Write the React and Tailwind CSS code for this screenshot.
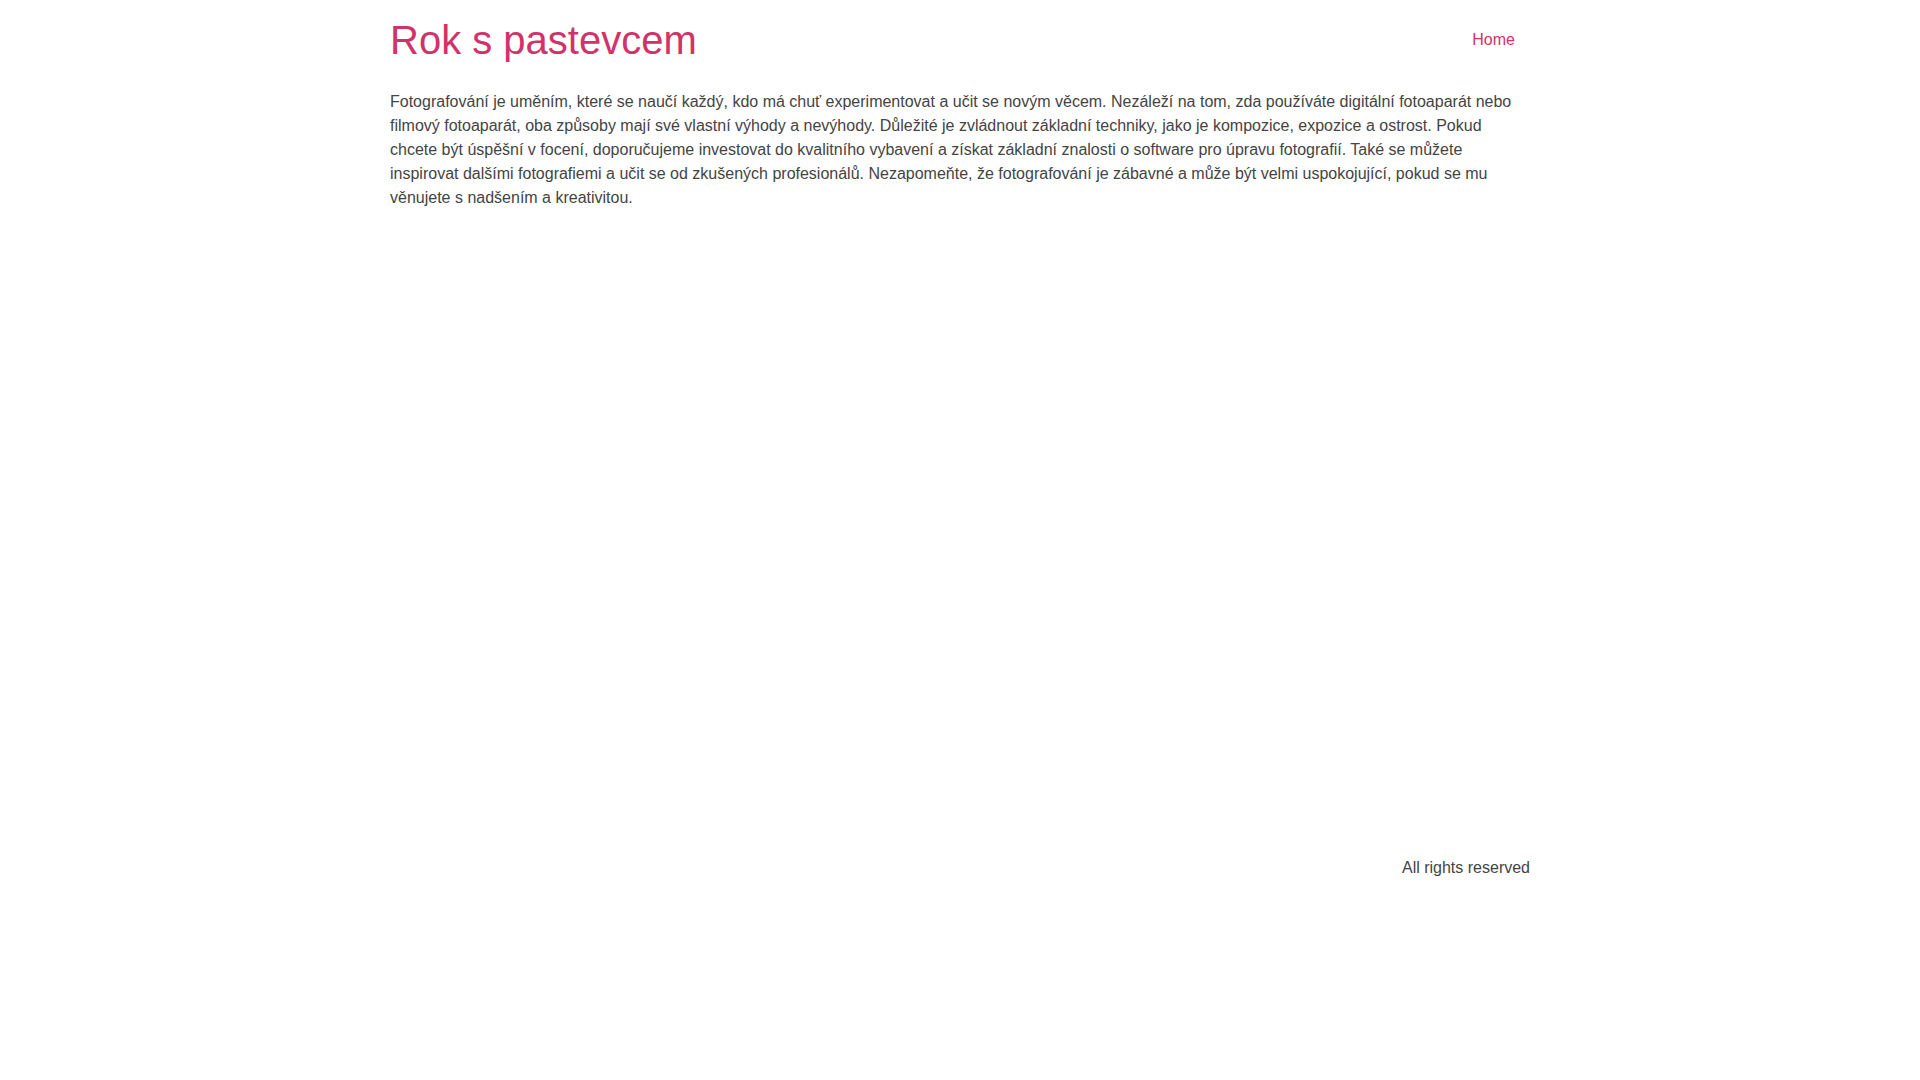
export default function App() {
  return (
    <div className="min-h-screen bg-white font-['Liberation_Sans',Arial,sans-serif]">
      <div className="mx-auto w-[1140px]">
        <header className="flex h-[80px] items-center justify-between">
          <h1 className="text-[40px] leading-[48px] font-normal text-[#d0336a]">Rok s pastevcem</h1>
          <nav>
            <a href="#" className="pl-4 pr-[15px] py-2 text-[16px] leading-6 text-[#d0336a]">Home</a>
          </nav>
        </header>
        <main className="mt-[10px] min-h-[766px]">
          <p className="text-[16px] leading-6 text-[#444444]">
            Fotografování je uměním, které se naučí každý, kdo má chuť experimentovat a učit se novým věcem. Nezáleží na tom, zda používáte digitální fotoaparát nebo filmový fotoaparát, oba způsoby mají své vlastní výhody a nevýhody. Důležité je zvládnout základní techniky, jako je kompozice, expozice a ostrost. Pokud chcete být úspěšní v focení, doporučujeme investovat do kvalitního vybavení a získat základní znalosti o software pro úpravu fotografií. Také se můžete inspirovat dalšími fotografiemi a učit se od zkušených profesionálů. Nezapomeňte, že fotografování je zábavné a může být velmi uspokojující, pokud se mu věnujete s nadšením a kreativitou.
          </p>
        </main>
        <footer className="flex justify-end">
          <p className="text-[16px] leading-6 text-[#444444]">All rights reserved</p>
        </footer>
      </div>
    </div>
  );
}
